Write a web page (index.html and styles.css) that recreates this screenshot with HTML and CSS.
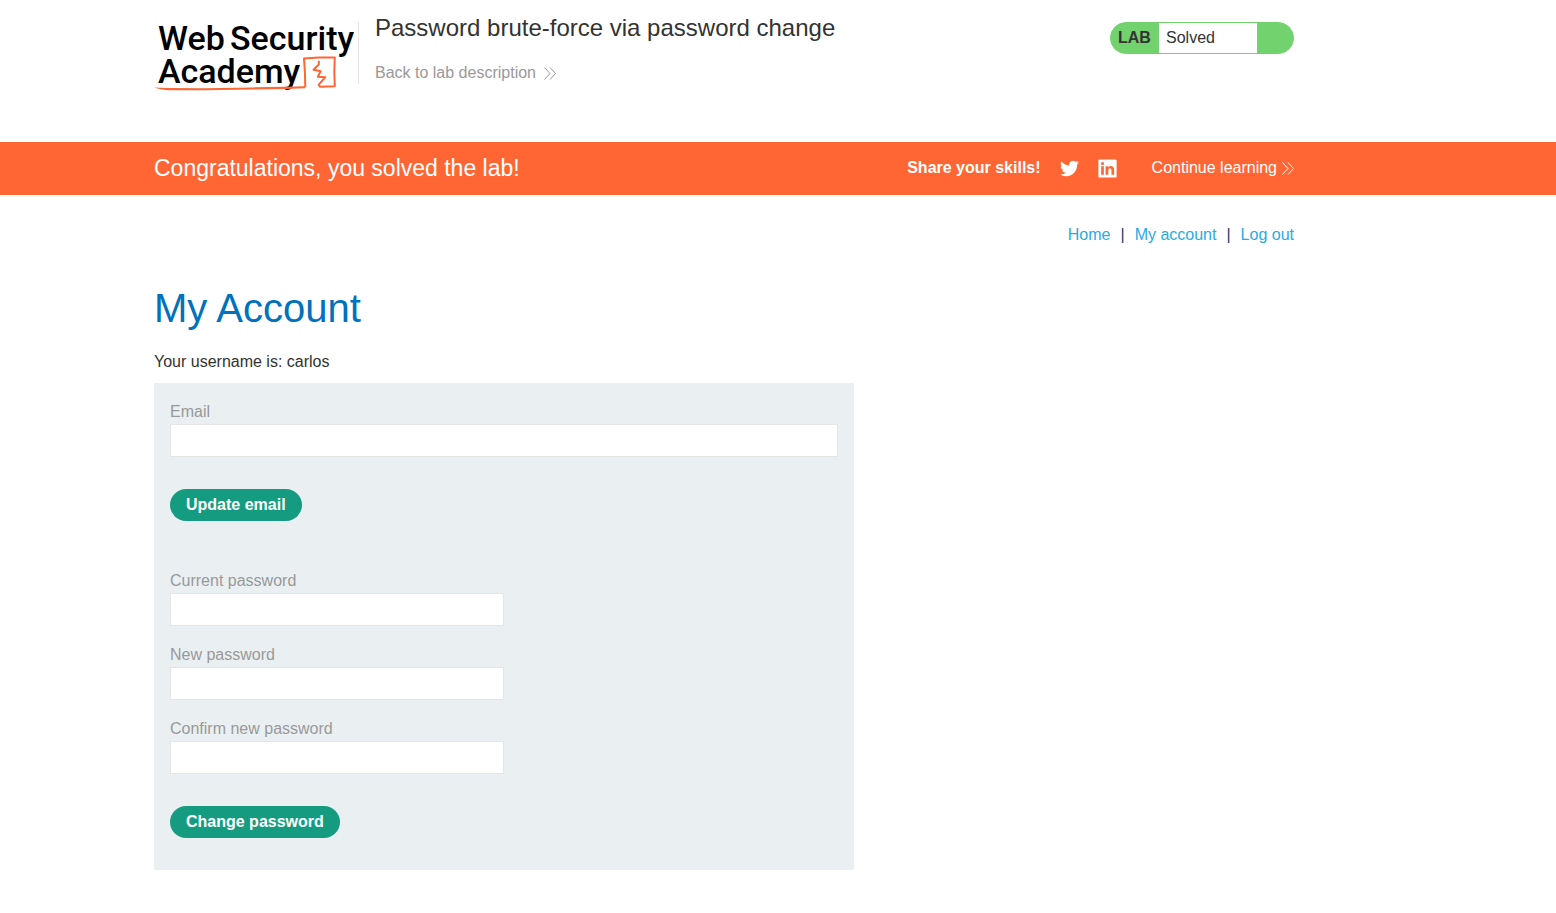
FILE: index.html
```html
<!DOCTYPE html>
<html lang="en">
<head>
<meta charset="utf-8">
<meta name="viewport" content="width=device-width, initial-scale=1">
<title>Password brute-force via password change</title>
<link rel="stylesheet" href="styles.css">
</head>
<body>
<header class="lab-header container">
  <a class="logo" href="#" aria-label="Web Security Academy">
    <svg width="204" height="72" viewBox="0 0 204 72">
      <g class="logo-text">
        <text x="4" y="28">Web</text>
        <text x="76" y="28">Security</text>
        <text x="4" y="61">Academy</text>
      </g>
      <g class="logo-mark">
        <path class="logo-fill" d="M0 65.600L14 66L50 66.200L98 65.400L132 64.800L151 64.200V66.300L132 67L98 67.600L50 68.300L14 68.300Q6 67.500 0 65.600Z"/>
        <path d="M151.300 65.200L150.900 50L150 36.500L165 35.600L180.800 35.500L180.300 50L180.800 64.300L166 64.800L164.600 62.800L171.300 55.200L163.800 54.700L166.600 49.300L159.500 47.700L164.800 42.500V38.800"/>
      </g>
    </svg>
  </a>
  <div class="title-block">
    <h2>Password brute-force via password change</h2>
    <a class="back-link" href="#">Back to lab description
      <svg class="chevrons" viewBox="0 0 12 13"><path d="M0.500 0.500L6 6.500L0.500 12.500M6 0.500L11.500 6.500L6 12.500"/></svg>
    </a>
  </div>
  <div class="lab-status">
    <span class="lab-tag">LAB</span>
    <p class="lab-state">Solved</p>
    <span class="lab-icon"></span>
  </div>
</header>
<section class="banner">
  <div class="banner-inner container">
    <h4>Congratulations, you solved the lab!</h4>
    <div class="share">
      <span class="share-label">Share your skills!</span>
      <a class="social" href="#" aria-label="Twitter">
        <svg viewBox="0 0 24 24"><path d="M23.950 4.570a10 10 0 0 1-2.820.77 4.960 4.960 0 0 0 2.160-2.720c-.95.550-2 .950-3.130 1.180a4.920 4.920 0 0 0-8.380 4.480C7.690 8.090 4.070 6.130 1.640 3.160a4.820 4.820 0 0 0-.67 2.480c0 1.710.87 3.210 2.190 4.100a4.900 4.900 0 0 1-2.230-.62v.06a4.920 4.920 0 0 0 3.950 4.830 5 5 0 0 1-2.210.080 4.940 4.940 0 0 0 4.600 3.420A9.870 9.870 0 0 1 0 19.540a13.990 13.990 0 0 0 7.550 2.210c9.050 0 14-7.500 14-13.980 0-.21 0-.42-.02-.63a9.940 9.940 0 0 0 2.420-2.570z"/></svg>
      </a>
      <a class="social" href="#" aria-label="LinkedIn">
        <svg viewBox="0 0 24 24"><path fill-rule="evenodd" d="M2 0.500H22Q23.500 0.500 23.500 2V22Q23.500 23.500 22 23.500H2Q0.500 23.500 0.500 22V2Q0.500 0.500 2 0.500ZM4 9V20H7.400V9ZM5.700 3.700A2 2 0 1 0 5.700 7.700A2 2 0 1 0 5.700 3.700ZM9.600 9V20H13V14.500C13 10.900 17 10.900 17 14.500V20H20.400V13.700C20.400 8 14.800 7.700 13 10.700V9Z"/></svg>
      </a>
      <a class="continue" href="#">Continue learning
        <svg class="chevrons" viewBox="0 0 12 13"><path d="M0.500 0.500L6 6.500L0.500 12.500M6 0.500L11.500 6.500L6 12.500"/></svg>
      </a>
    </div>
  </div>
</section>
<main class="container">
  <nav class="top-links">
    <a href="#">Home</a><span>|</span><a href="#">My account</a><span>|</span><a href="#">Log out</a>
  </nav>
  <h1>My Account</h1>
  <p class="username">Your username is: carlos</p>
  <div class="account-panel">
    <form class="email-form">
      <div class="field">
        <label for="email">Email</label>
        <input id="email" type="email" name="email">
      </div>
      <button class="button" type="submit">Update email</button>
    </form>
    <form class="password-form">
      <div class="field">
        <label for="current">Current password</label>
        <input id="current" type="password" name="current">
      </div>
      <div class="field">
        <label for="new">New password</label>
        <input id="new" type="password" name="new">
      </div>
      <div class="field">
        <label for="confirm">Confirm new password</label>
        <input id="confirm" type="password" name="confirm">
      </div>
      <button class="button" type="submit">Change password</button>
    </form>
  </div>
</main>
</body>
</html>
```
FILE: styles.css
```css
* {
  box-sizing: border-box;
}

body {
  margin: 0;
  background: #fff;
  color: #333332;
  font: 16px/24px "Liberation Sans", Arial, sans-serif;
}

h1, h2, h4, p {
  margin: 0;
  font-weight: 400;
}

a {
  text-decoration: none;
}

.container {
  width: calc(100% - 48px);
  max-width: 1248px;
  margin: 0 auto;
  padding-right: 108px;
}

.lab-header {
  display: flex;
  align-items: flex-start;
  min-height: 142px;
}

.logo {
  flex: none;
  margin-top: 22px;
}

.logo svg {
  display: block;
  overflow: visible;
}

.logo-text {
  font: 500 34px Roboto, sans-serif;
  fill: #000;
}

.logo-mark {
  fill: none;
  stroke: #ff6633;
  stroke-width: 2;
  stroke-linejoin: round;
}

.logo-fill {
  fill: #ff6633;
  stroke: none;
}

.title-block {
  flex: 1;
  margin-top: 22px;
  height: 62px;
  padding-left: 16px;
  border-left: 1px solid #e5e5e5;
}

.title-block h2 {
  margin: -8px 0 19px;
  font-size: 24px;
  line-height: 28px;
}

.back-link {
  display: inline-flex;
  align-items: center;
  gap: 8px;
  color: #999;
}

.chevrons {
  width: 12px;
  height: 13px;
  fill: none;
  stroke: currentColor;
}

.lab-status {
  display: flex;
  width: 184px;
  height: 32px;
  margin-top: 22px;
  overflow: hidden;
  border: 1px solid #72d26e;
  border-radius: 16px;
  background: #72d26e;
  line-height: 30px;
}

.lab-tag {
  width: 48px;
  padding-left: 7px;
  font-weight: 700;
}

.lab-state {
  flex: 1;
  padding-left: 7px;
  background: #fff;
}

.lab-icon {
  width: 36px;
}

.banner {
  background: #ff6633;
  color: #fff;
}

.banner-inner {
  display: flex;
  align-items: center;
  justify-content: space-between;
  min-height: 53px;
  padding-bottom: 1px;
}

.banner h4 {
  font-size: 23px;
  line-height: 28px;
}

.share {
  display: flex;
  align-items: center;
}

.share-label {
  font-weight: 700;
}

.social {
  margin-left: 19px;
}

.social svg {
  display: block;
  width: 19px;
  height: 19px;
  fill: #fff;
}

.continue {
  display: flex;
  align-items: center;
  gap: 5px;
  margin-left: 35px;
  color: #fff;
}

.top-links {
  display: flex;
  justify-content: flex-end;
  gap: 10px;
  padding-top: 28px;
}

.top-links a {
  color: #29abe2;
}

.top-links span {
  color: #1d3c6e;
}

h1 {
  margin-top: 37px;
  color: #0071bc;
  font-size: 40px;
  line-height: 48px;
}

.username {
  margin: 18px 0 9px;
}

.account-panel {
  max-width: 700px;
  padding: 16px 16px 32px;
  background: #eaf0f2;
}

.field {
  margin-bottom: 16px;
}

.field label {
  display: block;
  color: #999;
  line-height: 25px;
}

.field input {
  display: block;
  width: 100%;
  height: 33px;
  padding: 0 8px;
  border: 1px solid #e5e5e5;
  border-radius: 0;
  background: #fff;
  font: inherit;
}

.password-form {
  margin-top: 47px;
}

.password-form input {
  width: 50%;
}

.button {
  display: block;
  height: 32px;
  margin-top: 32px;
  padding: 0 16px;
  border: 0;
  border-radius: 16px;
  background: #159c80;
  color: #fff;
  font: 700 16px/32px "Liberation Sans", Arial, sans-serif;
}
```
